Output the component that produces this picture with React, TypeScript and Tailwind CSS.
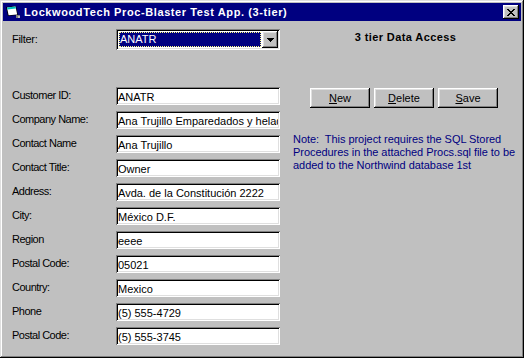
const fields: [string, string][] = [
  ["Customer ID:", "ANATR"],
  ["Company Name:", "Ana Trujillo Emparedados y helados"],
  ["Contact Name", "Ana Trujillo"],
  ["Contact Title:", "Owner"],
  ["Address:", "Avda. de la Constitución 2222"],
  ["City:", "México D.F."],
  ["Region", "eeee"],
  ["Postal Code:", "05021"],
  ["Country:", "Mexico"],
  ["Phone", "(5) 555-4729"],
  ["Postal Code:", "(5) 555-3745"],
];

const sunken =
  "shadow-[inset_1px_1px_0_#808080,inset_-1px_-1px_0_#fff,inset_2px_2px_0_#000,inset_-2px_-2px_0_#dfdfdf]";
const raised =
  "shadow-[inset_-1px_-1px_0_#000,inset_1px_1px_0_#fff,inset_-2px_-2px_0_#808080,inset_2px_2px_0_#dfdfdf]";

const AppIcon = () => (
  <svg width="16" height="16" viewBox="0 0 16 16">
    <path d="M1 3 L11 2 L13 11 L3 12 Z" fill="#000" />
    <path d="M2 3.5 L10.5 2.6 L12.2 10.5 L3.6 11.3 Z" fill="#fff" />
    <path d="M2 3.5 L10.5 2.6 L10.9 4.6 L2.4 5.5 Z" fill="#00c0c0" />
    <rect x="11" y="11" width="4" height="3" fill="#808080" />
    <rect x="13" y="12" width="2" height="2" fill="#c0c0c0" />
  </svg>
);

const CloseButton = () => (
  <div className={`flex h-[14px] w-[16px] items-center justify-center bg-[#c0c0c0] ${raised}`}>
    <svg width="8" height="7" viewBox="0 0 8 7" shapeRendering="crispEdges">
      <path
        d="M0 0h2v1h-2zM6 0h2v1h-2zM1 1h2v1h-2zM5 1h2v1h-2zM2 2h4v1h-4zM3 3h2v1h-2zM2 4h4v1h-4zM1 5h2v1h-2zM5 5h2v1h-2zM0 6h2v1h-2zM6 6h2v1h-2z"
        fill="#000"
      />
    </svg>
  </div>
);

const Btn = ({ first, rest }: { first: string; rest: string }) => (
  <div className={`flex h-[20px] w-[60px] items-center justify-center bg-[#c0c0c0] text-black ${raised}`}>
    <span className="underline underline-offset-[1px]">{first}</span>
    {rest}
  </div>
);

export default function App() {
  return (
    <div className="h-[358px] w-[524px] bg-white">
      <div
        className={`flex h-[358px] w-[524px] flex-col bg-[#c0c0c0] p-[3px] font-['Liberation_Sans',Arial,sans-serif] text-[11px] text-black shadow-[inset_-1px_-1px_0_#000,inset_1px_1px_0_#dfdfdf,inset_-2px_-2px_0_#808080,inset_2px_2px_0_#fff]`}
      >
        {/* title bar */}
        <div className="flex h-[18px] items-center bg-[#000080] pl-[2px] pr-[2px]">
          <AppIcon />
          <span className="ml-[3px] flex-1 font-bold tracking-[0.6px] text-white">
            LockwoodTech Proc-Blaster Test App. (3-tier)
          </span>
          <CloseButton />
        </div>

        {/* body */}
        <div className="flex flex-1 pl-[9px]">
          <div className="flex w-[268px] flex-col">
            <div className="mt-[8px] flex h-[21px] items-center">
              <span className="w-[104px] tracking-[-0.3px]">Filter:</span>
              <div className={`flex h-[21px] w-[164px] bg-white p-[2px] ${sunken}`}>
                <div className="m-[1px] flex flex-1 items-center border border-dotted border-[#ffff80] bg-[#000080] leading-none text-white">
                  ANATR
                </div>
                <div className={`flex h-[17px] w-[16px] items-center justify-center bg-[#c0c0c0] ${raised}`}>
                  <svg width="7" height="4" viewBox="0 0 7 4" shapeRendering="crispEdges">
                    <path d="M0 0h7v1h-7zM1 1h5v1h-5zM2 2h3v1h-3zM3 3h1v1h-1z" fill="#000" />
                  </svg>
                </div>
              </div>
            </div>

            <div className="mt-[37px] flex flex-col gap-[6px]">
              {fields.map(([label, value], i) => (
                <div key={i} className="flex h-[18px] items-center">
                  <span className="-mt-[2px] w-[104px] tracking-[-0.5px]">{label}</span>
                  <input
                    readOnly
                    defaultValue={value}
                    className={`h-[18px] w-[164px] bg-white px-[2px] pt-[2px] outline-none ${sunken}`}
                  />
                </div>
              ))}
            </div>
          </div>

          <div className="ml-[13px] flex flex-1 flex-col pr-[3px]">
            <div className="mt-[10px] text-center font-bold leading-[13px] tracking-[0.4px]">
              3 tier Data Access
            </div>
            <div className="mt-[44px] flex gap-[4px] pl-[17px]">
              <Btn first="N" rest="ew" />
              <Btn first="D" rest="elete" />
              <Btn first="S" rest="ave" />
            </div>
            <p className="mt-[25px] whitespace-nowrap leading-[13px] tracking-[-0.05px] text-[#000080]">
              Note:&nbsp; This project requires the SQL Stored
              <br />
              Procedures in the attached Procs.sql file to be
              <br />
              added to the Northwind database 1st
            </p>
          </div>
        </div>
      </div>
    </div>
  );
}
